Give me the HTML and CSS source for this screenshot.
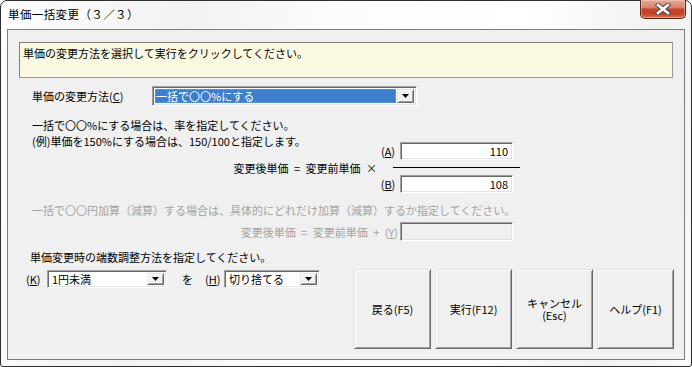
FILE: index.html
```html
<!DOCTYPE html>
<html lang="ja">
<head>
<meta charset="utf-8">
<title>単価一括変更</title>
<link rel="stylesheet" href="styles.css">
</head>
<body>
<div class="window">
  <div class="titlebar">
    <span class="title">単価一括変更（３／３）</span>
    <div class="close">
      <svg width="16" height="12" viewBox="0 0 16 12">
        <path d="M3 2 L13 10 M13 2 L3 10" stroke="#4a4a4a" stroke-width="4.6" stroke-linecap="square" fill="none"/>
        <path d="M3 2 L13 10 M13 2 L3 10" stroke="#ffffff" stroke-width="2.6" stroke-linecap="square" fill="none"/>
      </svg>
    </div>
  </div>
  <div class="client">
    <div class="info">単価の変更方法を選択して実行をクリックしてください。</div>

    <div class="method-row">
      <span class="method-label">単価の変更方法(<u>C</u>)</span>
      <div class="combo sunken combo-method">
        <div class="combo-field selected"><span>一括で〇〇%にする</span></div>
        <div class="dropbtn"><svg width="7" height="4" viewBox="0 0 7 4"><path d="M0 0 H7 L3.5 4 Z" fill="#000"/></svg></div>
      </div>
    </div>

    <div class="desc">
      <div>一括で〇〇%にする場合は、率を指定してください。</div>
      <div>(例)単価を150%にする場合は、150/100と指定します。</div>
    </div>

    <div class="formula">
      <span class="f-label">変更後単価 = 変更前単価 ×</span>
      <div class="fraction">
        <div class="frow"><span class="key">(<u>A</u>)</span><div class="field sunken">110</div></div>
        <div class="bar"></div>
        <div class="frow"><span class="key">(<u>B</u>)</span><div class="field sunken">108</div></div>
      </div>
    </div>

    <div class="disabled-text">一括で〇〇円加算（減算）する場合は、具体的にどれだけ加算（減算）するか指定してください。</div>

    <div class="add-row">
      <span class="add-label">変更後単価 = 変更前単価 + (<u>Y</u>)</span>
      <div class="field sunken field-disabled"></div>
    </div>

    <div class="instr">単価変更時の端数調整方法を指定してください。</div>

    <div class="bottom">
      <div class="round-row">
        <span class="rkey">(<u>K</u>)</span>
        <div class="combo sunken combo-k">
          <div class="combo-field"><span>1円未満</span></div>
          <div class="dropbtn"><svg width="7" height="4" viewBox="0 0 7 4"><path d="M0 0 H7 L3.5 4 Z" fill="#000"/></svg></div>
        </div>
        <span class="wo">を</span>
        <span class="rkey rkey-h">(<u>H</u>)</span>
        <div class="combo sunken combo-h">
          <div class="combo-field"><span>切り捨てる</span></div>
          <div class="dropbtn"><svg width="7" height="4" viewBox="0 0 7 4"><path d="M0 0 H7 L3.5 4 Z" fill="#000"/></svg></div>
        </div>
      </div>
      <div class="buttons">
        <div class="btn">戻る(F5)</div>
        <div class="btn">実行(F12)</div>
        <div class="btn btn-two"><span>キャンセル</span><span>(Esc)</span></div>
        <div class="btn">ヘルプ(F1)</div>
      </div>
    </div>
  </div>
</div>
</body>
</html>
```

FILE: styles.css
```css
* { box-sizing: border-box; }
html, body { margin: 0; padding: 0; }
body {
  width: 692px;
  height: 367px;
  overflow: hidden;
  background: #ffffff;
  font-family: "Noto Sans CJK JP", "Noto Sans", sans-serif;
  font-size: 11px;
  color: #000;
}
u { text-decoration: underline; text-underline-offset: 1px; }

.window {
  width: 692px;
  height: 367px;
  border: 1px solid #2e2e2e;
  border-radius: 7px 7px 3px 3px;
  background: linear-gradient(100deg, #fdfdfd 0%, #f2f2f2 25%, #fcfcfc 45%, #ffffff 70%, #f1f1f1 88%, #fafafa 100%);
  display: flex;
  flex-direction: column;
}

.titlebar {
  height: 28px;
  display: flex;
  align-items: center;
  padding-left: 7px;
  flex: none;
}
.title {
  font-size: 11.5px;
  letter-spacing: 0.4px;
  color: #000;
  margin-top: -2px;
}
.close {
  align-self: flex-start;
  margin-left: auto;
  margin-right: 5px;
  margin-top: -1px;
  width: 46px;
  height: 19px;
  border: 1px solid #5a2418;
  border-top: none;
  border-radius: 0 0 5px 5px;
  background: linear-gradient(#e7a894 0%, #d98670 40%, #c4432a 52%, #c34027 75%, #d9704f 100%);
  box-shadow: inset 0 0 0 1px rgba(255, 220, 200, 0.45);
  display: flex;
  align-items: center;
  justify-content: center;
}

.client {
  flex: 1;
  margin: 0 6px 6px 6px;
  border: 1px solid #7c7c7c;
  background: #f0f0f0;
  padding: 12px 10px 0 0;
  display: flex;
  flex-direction: column;
}

.info {
  margin-left: 11px;
  width: 654px;
  height: 36px;
  border: 1px solid #9a9a9a;
  border-top-color: #808080;
  border-left-color: #808080;
  background: #fcf9e2;
  padding: 2px 0 0 3px;
  line-height: 16px;
}

.sunken {
  border: 1px solid;
  border-color: #a0a0a0 #ffffff #ffffff #a0a0a0;
  box-shadow: inset 1px 1px #696969, inset -1px -1px #e3e3e3;
}

.method-row {
  margin-top: 8px;
  padding-left: 24px;
  height: 20px;
  display: flex;
  align-items: center;
}
.method-label {
  width: 120px;
  line-height: 16px;
}

.combo {
  display: flex;
  padding: 2px;
  background: #fff;
}
.combo-method { width: 265px; height: 20px; }
.combo-field {
  flex: 1;
  display: flex;
  align-items: center;
  padding-left: 2px;
  line-height: 13px;
  white-space: nowrap;
}
.combo-field.selected {
  background: #3d7fcc;
  color: #fff;
  border: 1px dotted #e0902a;
  padding-left: 0;
  margin-right: 1px;
}
.dropbtn {
  width: 17px;
  flex: none;
  background: #f0f0f0;
  border: 1px solid;
  border-color: #e3e3e3 #696969 #696969 #e3e3e3;
  box-shadow: inset 1px 1px #ffffff, inset -1px -1px #a0a0a0;
  display: flex;
  align-items: center;
  justify-content: center;
}

.desc {
  margin-top: 11px;
  padding-left: 24px;
  line-height: 16px;
}

.formula {
  margin-top: -7px;
  padding-left: 222px;
  display: flex;
  align-items: center;
}
.f-label {
  width: 147px;
  text-align: right;
  white-space: nowrap;
  word-spacing: 3px;
  line-height: 16px;
}
.fraction {
  margin-left: -1px;
  width: 144px;
  display: flex;
  flex-direction: column;
}
.frow {
  display: flex;
  align-items: center;
  height: 18px;
}
.key {
  width: 24px;
  text-align: center;
  line-height: 16px;
}
.field {
  width: 113px;
  height: 18px;
  background: #fff;
  text-align: right;
  padding-right: 4px;
  line-height: 16px;
}
.bar {
  height: 1px;
  background: #000;
  margin: 7px 0 7px 17px;
  width: 127px;
}

.disabled-text {
  margin-top: 9px;
  padding-left: 24px;
  line-height: 16px;
  color: #a3a3a3;
  white-space: nowrap;
}

.add-row {
  margin-top: 4px;
  padding-left: 222px;
  display: flex;
  align-items: center;
  height: 19px;
}
.add-label {
  width: 170px;
  text-align: right;
  padding-right: 2px;
  color: #a3a3a3;
  word-spacing: 3px;
  line-height: 16px;
  white-space: nowrap;
}
.field-disabled {
  height: 19px;
  background: #f0f0f0;
}

.instr {
  margin-top: 8px;
  padding-left: 22px;
  line-height: 16px;
}

.bottom {
  margin-top: 4px;
  display: flex;
  align-items: flex-start;
}
.round-row {
  margin-top: 1px;
  padding-left: 18px;
  display: flex;
  align-items: center;
  height: 18px;
}
.rkey {
  width: 21px;
  line-height: 16px;
}
.combo-k { width: 120px; height: 18px; }
.combo-h { width: 96px; height: 18px; }
.wo {
  margin-left: 15px;
  width: 23px;
  line-height: 16px;
}
.rkey-h { width: 19px; }

.buttons {
  margin-left: auto;
  display: flex;
  gap: 4px;
}
.btn {
  width: 77px;
  height: 80px;
  border: 1px solid;
  border-color: #e3e3e3 #696969 #696969 #e3e3e3;
  box-shadow: inset 1px 1px #ffffff, inset -1px -1px #a0a0a0;
  background: #f0f0f0;
  display: flex;
  align-items: center;
  justify-content: center;
  line-height: 13px;
  white-space: nowrap;
}
.btn-two {
  flex-direction: column;
  line-height: 12px;
}
```
